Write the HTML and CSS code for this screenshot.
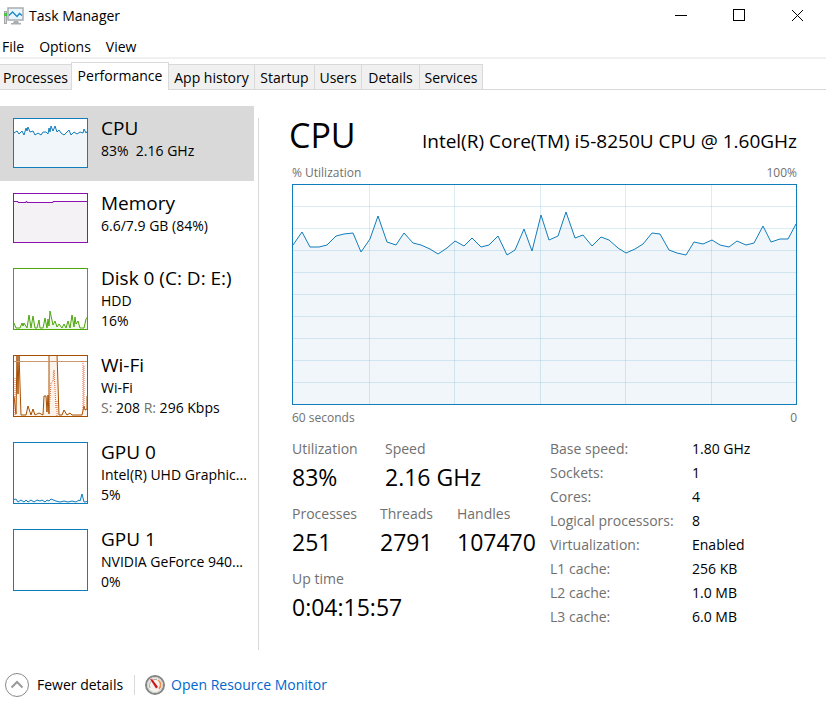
FILE: index.html
```
<!DOCTYPE html>
<html lang="en">
<head>
  <meta charset="UTF-8" />
  <meta name="viewport" content="width=device-width, initial-scale=1.0"/>
  <title>Task Manager</title>
  <link rel="stylesheet" href="styles.css">
</head>
<body>
  <header class="titlebar">
    <svg class="app-icon" width="20" height="18" viewBox="0 0 20 18">
      <rect x="0.5" y="4.5" width="2" height="12" fill="#d5d8da" stroke="#a4a8ab"/>
      <rect x="0" y="6" width="3" height="3" fill="#4cc43e"/>
      <rect x="4" y="1" width="15" height="12" fill="#e9f5fc" stroke="#a9adb0" stroke-width="1.5"/>
      <path d="M5 8.5 L8.5 5 L13 9.5 L15.5 6.5 L18 8.5" fill="none" stroke="#1687c9" stroke-width="1.3"/>
      <path d="M10 14 h4 l1 2 h2 v1.500 H7 V16 h2 Z" fill="#a9adb0"/>
    </svg>
    <h1>Task Manager</h1>
    <div class="window-buttons">
      <button aria-label="Minimize"><svg width="13" height="13"><path d="M0 6.5 H12" stroke="#000"/></svg></button>
      <button aria-label="Maximize"><svg width="13" height="13"><rect x="0.5" y="0.5" width="11" height="11" fill="none" stroke="#000"/></svg></button>
      <button aria-label="Close"><svg width="13" height="13"><path d="M1 1 L12 12 M12 1 L1 12" stroke="#000"/></svg></button>
    </div>
  </header>

  <nav class="menu">
    <button>File</button>
    <button>Options</button>
    <button>View</button>
  </nav>

  <div class="tabs" role="tablist">
    <button role="tab">Processes</button>
    <button role="tab" class="active" aria-selected="true">Performance</button>
    <button role="tab">App history</button>
    <button role="tab">Startup</button>
    <button role="tab">Users</button>
    <button role="tab">Details</button>
    <button role="tab" class="last">Services</button>
  </div>

  <main class="content">
    <aside class="sidebar">
      <button class="item selected">
        <svg class="thumb cpu" viewBox="0 0 73 48" preserveAspectRatio="none">
          <path class="area" d="M-2 14 H0 L3 12 L5 15 L8 12 L10 16 L12 9 L13 12 L14 8 L16 13 L19 12 L21 16 L24 14 L27 16 L29 13 L32 13 L34 15 L35 9 L36 13 L37 7 L39 12 L41 7 L43 13 L45 11 L47 14 L50 16 L53 13 L55 11 L57 16 L60 13 L63 15 L66 13 L69 14 L70 10 L72 14 L75 10 V52 H-2 Z"/>
        </svg>
        <span class="info"><span class="name">CPU</span><span class="sub">83%&nbsp; 2.16 GHz</span></span>
      </button>
      <button class="item">
        <svg class="thumb memory" viewBox="0 0 73 48" preserveAspectRatio="none">
          <path class="area" d="M-2 7.5 H4 V8.5 H12 V7.5 H13 V8.5 H39 V7.5 H76 V52 H-2 Z"/>
        </svg>
        <span class="info"><span class="name">Memory</span><span class="sub">6.6/7.9 GB (84%)</span></span>
      </button>
      <button class="item tall">
        <svg class="thumb disk" viewBox="0 0 73 60" preserveAspectRatio="none">
          <path class="area" d="M-2 54 H0 L2 59 H6 L8 54 L9 57 L10 54 L13 59 L15 46 L17 59 L19 47 L21 59 H23 L25 51 L26 59 H29 L31 49 L33 59 L34 50 L35 57 L36 42 L39 56 L41 52 L43 58 L45 55 L48 59 L50 55 L52 59 L54 52 L56 59 L58 46 L60 58 L61 48 L62 55 L64 52 L66 59 H70 L72 50 L75 46 V64 H-2 Z"/>
        </svg>
        <span class="info"><span class="name">Disk 0 (C: D: E:)</span><span class="sub">HDD</span><span class="sub">16%</span></span>
      </button>
      <button class="item tall">
        <svg class="thumb wifi" viewBox="0 0 73 60" preserveAspectRatio="none">
          <path class="area" d="M-2 40 H0 L2 58 L3 -2 L4 38 L5 -2 L7 59 H12 L14 50 L17 59 L19 53 L21 59 L25 57 L29 59 L30 40 L32 40 L33 56 L34 39 L35 58 L35 -2 H43 L45 59 H48 L50 54 L53 59 L56 57 L58 59 H68 L70 50 L71 54 L73 53 V40 H76 V64 H-2 Z"/>
          <path class="limit" d="M0 5.5 H73"/>
          <path class="dotted" d="M1 22 V60 M35 58 L37 27 L39 25 L40 14 L42 53 M43 45 V60 M69 5 V54 M70 10 V54"/>
        </svg>
        <span class="info"><span class="name">Wi-Fi</span><span class="sub">Wi-Fi</span><span class="sub"><span class="dim">S:</span> 208 <span class="dim">R:</span> 296 Kbps</span></span>
      </button>
      <button class="item tall">
        <svg class="thumb gpu" viewBox="0 0 73 60" preserveAspectRatio="none">
          <path class="area" d="M-2 57 L2 56 L4 59 L7 57 L10 59 L12 57 L14 59 L17 57 L20 59 L23 57 L26 58 L28 57 L31 59 L33 57 L35 58 L37 56 L42 58 L46 59 L50 58 L54 59 L58 58 L62 59 L65 57 L66 58 L68 51 L70 59 L76 58 V64 H-2 Z"/>
        </svg>
        <span class="info"><span class="name">GPU 0</span><span class="sub">Intel(R) UHD Graphic...</span><span class="sub">5%</span></span>
      </button>
      <button class="item tall">
        <svg class="thumb gpu" viewBox="0 0 73 60"></svg>
        <span class="info"><span class="name">GPU 1</span><span class="sub">NVIDIA GeForce 940...</span><span class="sub">0%</span></span>
      </button>
    </aside>

    <section class="details">
      <div class="heading">
        <h2>CPU</h2>
        <span class="model">Intel(R) Core(TM) i5-8250U CPU @ 1.60GHz</span>
      </div>
      <div class="scale"><span>% Utilization</span><span>100%</span></div>
      <svg class="chart" viewBox="0 0 503 219" preserveAspectRatio="none">
        <path class="area" d="M-2 60 H0 L9 47 L17 62 H26 L34 60 L43 51 L51 49 L60 48 L68 67 L77 54 L85 31 L94 57 L103 60 L111 48 L120 58 L128 60 L137 64 L145 69 L154 63 L162 56 L171 61 L179 53 L188 62 L196 60 L205 51 L214 70 L222 65 L231 44 L239 66 L248 30 L256 55 L265 51 L273 27 L282 53 L290 50 L299 61 L308 52 L316 55 L325 63 L333 68 L342 64 L350 59 L359 48 L367 49 L376 65 L384 68 L393 70 L401 57 L410 59 L419 55 L427 60 L436 62 L444 56 L453 60 L461 58 L470 41 L478 57 L487 54 H495 L503 39 H506 V222 H-2 Z"/>
        <path class="grid" d="M0 21.5 H503 M0 43.5 H503 M0 65.5 H503 M0 87.5 H503 M0 109.5 H503 M0 131.5 H503 M0 153.5 H503 M0 175.5 H503 M0 197.5 H503 M76.5 0 V219 M161.5 0 V219 M247.5 0 V219 M332.5 0 V219 M418.5 0 V219"/>
      </svg>
      <div class="scale"><span>60 seconds</span><span>0</span></div>

      <div class="stats">
        <div class="counters">
          <dl>
            <div class="usage"><dt>Utilization</dt><dd>83%</dd></div>
            <div><dt>Speed</dt><dd>2.16 GHz</dd></div>
          </dl>
          <dl>
            <div class="count"><dt>Processes</dt><dd>251</dd></div>
            <div class="threads"><dt>Threads</dt><dd>2791</dd></div>
            <div><dt>Handles</dt><dd>107470</dd></div>
          </dl>
          <dl>
            <div><dt>Up time</dt><dd>0:04:15:57</dd></div>
          </dl>
        </div>
        <table class="specs">
          <tr><th>Base speed:</th><td>1.80 GHz</td></tr>
          <tr><th>Sockets:</th><td>1</td></tr>
          <tr><th>Cores:</th><td>4</td></tr>
          <tr><th>Logical processors:</th><td>8</td></tr>
          <tr><th>Virtualization:</th><td>Enabled</td></tr>
          <tr><th>L1 cache:</th><td>256 KB</td></tr>
          <tr><th>L2 cache:</th><td>1.0 MB</td></tr>
          <tr><th>L3 cache:</th><td>6.0 MB</td></tr>
        </table>
      </div>
    </section>
  </main>

  <footer class="footer">
    <button class="fewer">
      <svg width="24" height="24" viewBox="0 0 24 24" fill="none">
        <circle cx="12" cy="12" r="11.5" stroke="#8a8a8a"/>
        <path d="M6.5 14.5 L12 9 L17.5 14.5" stroke="#9a9a9a" stroke-width="2"/>
      </svg>
      Fewer details
    </button>
    <a class="monitor" href="#">
      <svg width="20" height="20" viewBox="0 0 20 20" fill="none">
        <circle cx="10" cy="10" r="9" fill="#f4f2ec" stroke="#858585" stroke-width="2"/>
        <circle cx="10" cy="10" r="7.5" stroke="#d0d0cc"/>
        <path d="M5 13 A6 6 0 0 1 12 4.5" stroke="#a9aaa6"/>
        <path d="M13 5 A6 6 0 0 1 14 14" stroke="#ef8a4c" stroke-width="1.5"/>
        <path d="M5 4 L7.5 4.5 L13 12 L11 13.5 Z" fill="#d0141c"/>
      </svg>
      <span>Open Resource Monitor</span>
    </a>
  </footer>
</body>
</html>
```
FILE: styles.css
```
:root {
  --fg: #000000;
  --dim: #707070;
  --line: #d9d9d9;
  --blue: #117dbb;
  --link: #0066cc;
}

* {
  box-sizing: border-box;
}

body {
  margin: 0;
  min-height: 100vh;
  display: flex;
  flex-direction: column;
  background: #ffffff;
  color: var(--fg);
  font-family: 'Segoe UI', 'Open Sans', sans-serif;
  font-size: 14px;
  line-height: 20px;
}

button {
  margin: 0;
  padding: 0;
  border: none;
  background: none;
  color: inherit;
  font: inherit;
}

h1, h2, dl, dd {
  margin: 0;
  font-weight: normal;
}

svg {
  display: block;
  flex: none;
}

.titlebar {
  display: flex;
  align-items: center;
  height: 32px;
  padding-left: 4px;
}

.titlebar h1 {
  margin-left: 5px;
  font-size: 14px;
}

.window-buttons {
  display: flex;
  align-self: flex-start;
  margin-left: auto;
}

.window-buttons button {
  display: flex;
  justify-content: center;
  align-items: center;
  width: 58px;
  height: 30px;
}

.menu {
  display: flex;
  gap: 15px;
  height: 27px;
  padding: 5px 2px 0;
  border-bottom: 2px solid #f0f0f0;
}

.menu button {
  height: 20px;
}

.tabs {
  display: grid;
  grid-template-columns: 71px 98px 85px 60px 47px 58px 64px;
  align-items: end;
  height: 31px;
  border-bottom: 1px solid var(--line);
}

.tabs button {
  height: 25px;
  padding-top: 1px;
  border: 1px solid var(--line);
  border-width: 1px 0 0 1px;
  background: #f0f0f0;
  white-space: nowrap;
}

.tabs button:first-child {
  border-left: none;
}

.tabs .active {
  height: 28px;
  margin-bottom: -1px;
  padding: 0 0 2px;
  border-right-width: 1px;
  background: #ffffff;
}

.tabs .active + button {
  border-left: none;
}

.tabs .last {
  border-right-width: 1px;
}

.content {
  display: flex;
  padding-top: 16px;
}

.sidebar {
  flex: none;
  width: 254px;
}

.item {
  display: flex;
  width: 100%;
  height: 75px;
  padding: 12px 0 0 13px;
  text-align: left;
}

.item.tall {
  height: 87px;
}

.item.selected {
  background: var(--line);
}

.thumb {
  width: 75px;
  height: 50px;
  border: 1px solid;
  background: #ffffff;
}

.tall .thumb {
  height: 62px;
}

.info {
  display: flex;
  flex-direction: column;
  margin-left: 13px;
  white-space: nowrap;
}

.name {
  height: 23px;
  font-size: 19px;
}

.dim {
  color: var(--dim);
}

.area {
  stroke: currentColor;
  fill: #f1f6fa;
}

.cpu, .gpu, .chart {
  color: var(--blue);
}

.memory {
  color: #8b12ae;
}

.memory .area {
  fill: #f4f2f4;
}

.disk {
  color: #4da60c;
}

.disk .area {
  fill: #eff7e9;
}

.wifi {
  color: #a74f01;
}

.wifi .area {
  fill: #fcf3eb;
}

.limit {
  stroke: #c9986d;
}

.dotted {
  fill: none;
  stroke: #e0683c;
  stroke-dasharray: 1 1;
}

.details {
  flex: 1;
  height: 532px;
  margin: 12px 0 0 4px;
  padding: 0 29px 0 33px;
  border-left: 1px solid var(--line);
}

.heading {
  display: flex;
  justify-content: space-between;
  align-items: baseline;
  height: 45px;
  margin-left: -3px;
  line-height: 34px;
}

.heading h2 {
  font-size: 34px;
}

.model {
  font-size: 19px;
}

.scale {
  display: flex;
  justify-content: space-between;
  color: var(--dim);
  font-size: 12px;
}

.chart {
  width: 100%;
  height: 221px;
  margin: 1px 0 3px;
  border: 1px solid var(--blue);
}

.chart .grid {
  fill: none;
  stroke: #1180bb;
  stroke-opacity: 0.15;
}

.stats {
  display: flex;
  margin-top: 11px;
}

.counters {
  width: 258px;
}

.counters dl {
  display: flex;
  height: 65px;
}

.counters dt {
  color: var(--dim);
}

.counters dd {
  font-size: 23px;
  line-height: 36px;
}

.usage {
  width: 93px;
}

.count {
  width: 88px;
}

.threads {
  width: 77px;
}

.specs {
  align-self: flex-start;
  border-collapse: collapse;
  margin-top: -2px;
}

.specs th {
  width: 142px;
  padding: 2px 0;
  color: var(--dim);
  font-weight: normal;
  text-align: left;
}

.specs td {
  padding: 2px 0;
}

.footer {
  display: flex;
  align-items: center;
  height: 50px;
  margin-top: 10px;
  padding-left: 5px;
}

.fewer, .monitor {
  display: flex;
  align-items: center;
  gap: 8px;
}

.monitor {
  gap: 6px;
  margin-left: 11px;
  padding-left: 10px;
  border-left: 1px solid var(--line);
  color: var(--link);
  text-decoration: none;
}
```
